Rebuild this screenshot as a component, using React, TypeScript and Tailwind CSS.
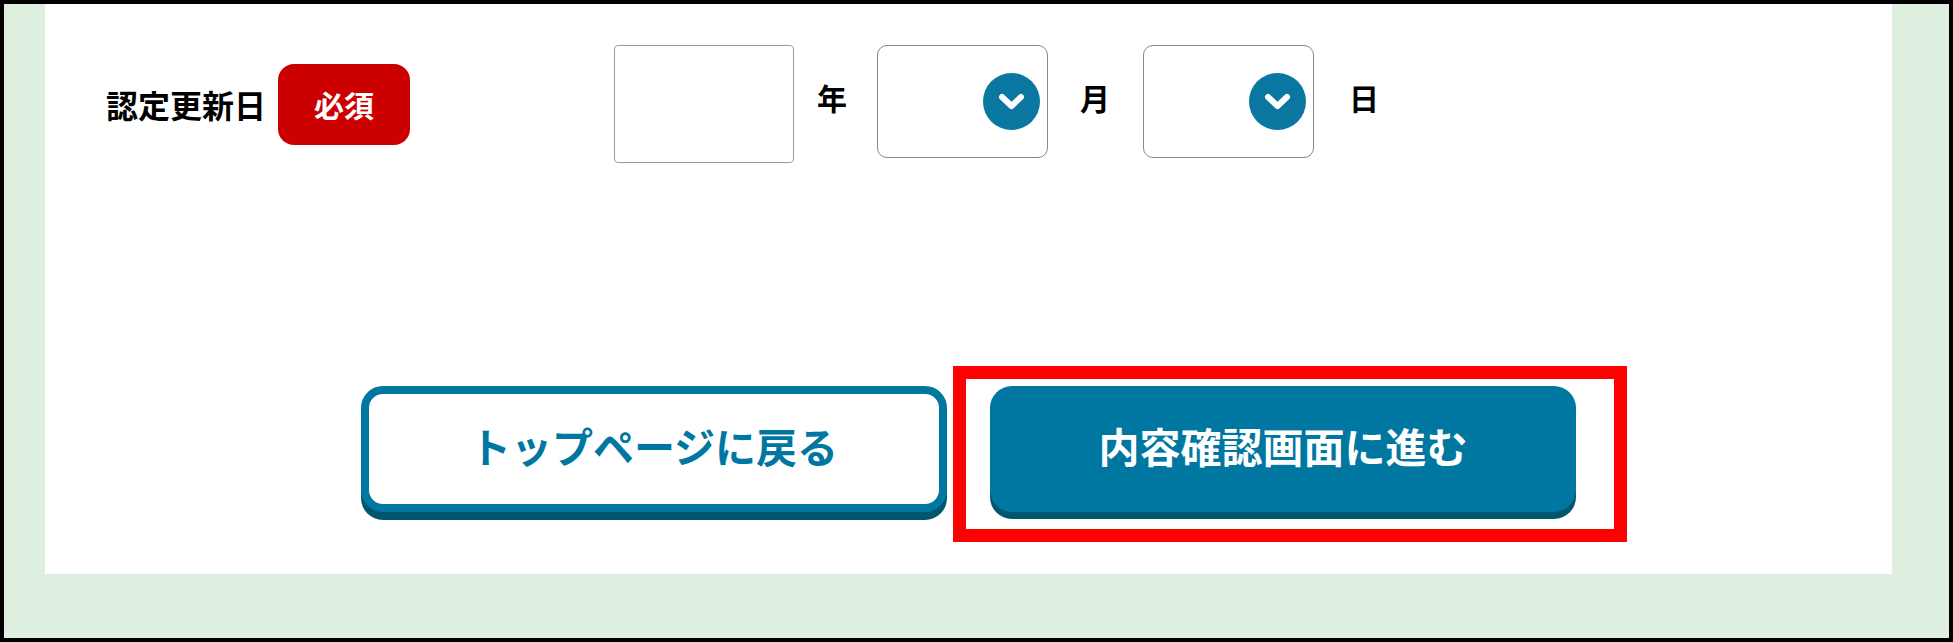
import React from "react";

const font = { fontFamily: '"Noto Sans CJK JP", "Noto Sans", sans-serif' };

const SelectBox = () => (
  <div className="flex h-[113px] w-[171px] self-start items-center justify-end rounded-[10px] border border-[#888] bg-white pr-[7px]">
    <svg width="57" height="57" viewBox="0 0 57 57">
      <circle cx="28.5" cy="28.5" r="28.5" fill="#0a77a0" />
      <path d="M19 24 L28.5 33 L38 24" fill="none" stroke="#fff" strokeWidth="6" strokeLinecap="round" strokeLinejoin="round" />
    </svg>
  </div>
);

export default function App() {
  return (
    <div className="h-[642px] w-[1953px] overflow-hidden border-4 border-black bg-[#dfefdf]" style={font}>
      <div className="ml-[41px] flex h-[570px] w-[1847px] flex-col bg-white">
        {/* date row */}
        <div className="flex items-center pl-[61px] pt-[41px]">
          <div className="flex items-center">
            <span className="text-[32px] font-bold text-black">認定更新日</span>
            <span className="ml-[12px] flex h-[81px] w-[132px] items-center justify-center rounded-[16px] bg-[#cc0000] text-[30px] font-bold text-white">
              必須
            </span>
          </div>
          <div className="ml-[204px] h-[118px] w-[180px] rounded-[4px] border border-[#999] bg-white" />
          <span className="mb-[14px] ml-[23px] w-[60px] text-[30px] font-bold text-black">年</span>
          <SelectBox />
          <span className="mb-[14px] ml-[32px] w-[63px] text-[30px] font-bold text-black">月</span>
          <SelectBox />
          <span className="mb-[14px] ml-[35px] text-[30px] font-bold text-black">日</span>
        </div>

        {/* buttons */}
        <div className="mt-[223px] flex justify-center gap-[43px]">
          <button className="flex h-[126px] w-[586px] items-center justify-center rounded-[22px] border-[8px] border-[#0077a0] bg-white pb-[6px] text-[41px] font-bold text-[#0077a0] shadow-[0_8px_0_#00566f]">
            トップページに戻る
          </button>
          <div className="relative">
            <button className="flex h-[126px] w-[586px] items-center justify-center rounded-[22px] bg-[#0077a0] pb-[6px] text-[41px] font-bold text-white shadow-[0_7px_0_#00566f]">
              内容確認画面に進む
            </button>
            <div className="pointer-events-none absolute -bottom-[30px] -left-[37px] -right-[51px] -top-[20px] border-[13px] border-[#ff0000]" />
          </div>
        </div>
      </div>
    </div>
  );
}
